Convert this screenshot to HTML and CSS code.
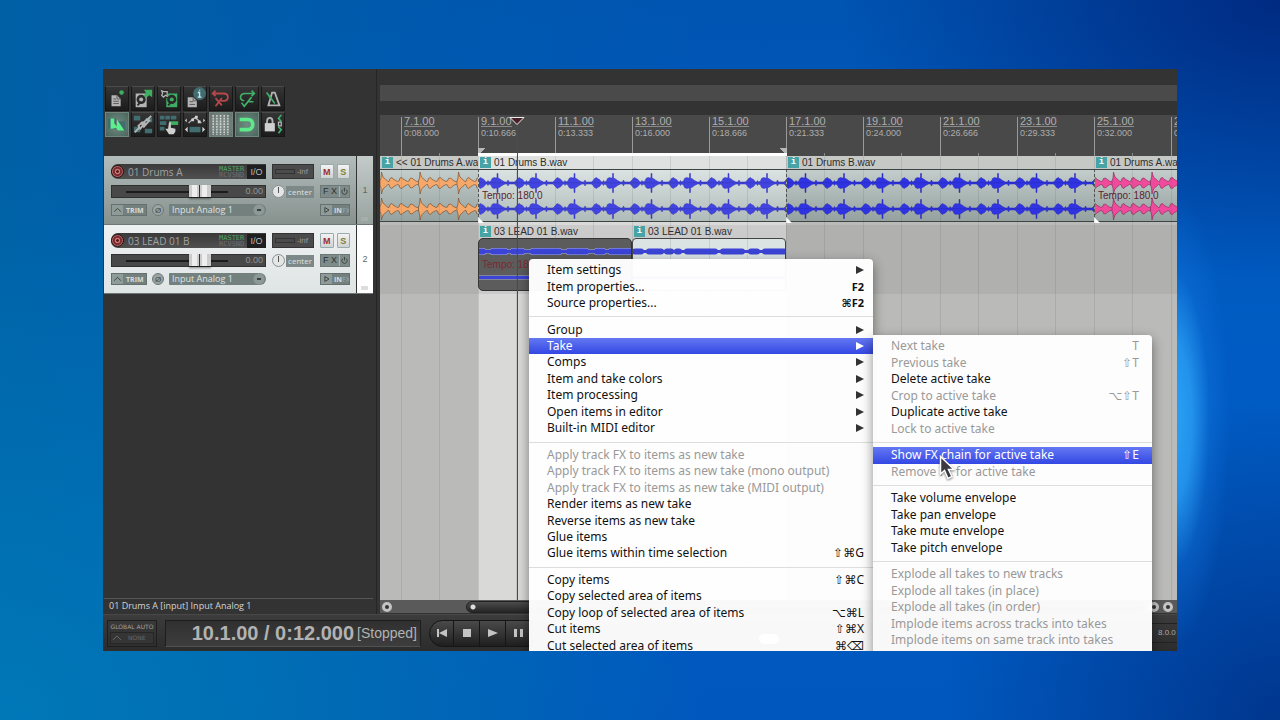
FILE: index.html
```html
<!DOCTYPE html>
<html lang="en">
<head>
<meta charset="utf-8">
<title>Audio workstation</title>
<link rel="stylesheet" href="styles.css">
</head>
<body>
<svg class="defs" width="0" height="0" aria-hidden="true">
  <defs>
    <path id="beat" d="M0 12H2L4 10 5 8.500 7 7.500 8 8.500 10 9.500 12 12H13L14 10.500 15 12 17 11 18 8.500 20 7.500 22 8 23 7.500V3.500H24V8L26 9 28 10.500 31 12H33L34 10 35 12H38.500V13.200H0Z"/>
    <g id="bar"><use href="#beat"/><use href="#beat" x="38.500"/></g>
    <pattern id="blueWave" x="-5" y="0" width="77" height="26" patternUnits="userSpaceOnUse">
      <g class="blue"><use href="#bar"/><use href="#bar" transform="translate(0 26) scale(1 -1)"/></g>
    </pattern>
    <path id="drops" d="M0 11L1 8 1.500 2 2 4 3 7 8 11.500 9 11.500 10 8.500 12 7.500 13 9 17.500 11.500 19 11 20 8 22 7.500 23 9 27.500 11.500 29 11 30 8.500 32 8 33 9 36.500 11.500 38.500 11V15L36.500 14.500 33 17 32 18 30 17.500 29 15 27.500 14.500 23 17 22 18.500 20 18 19 15 17.500 14.500 13 17 12 18.500 10 17.500 9 14.500 8 14.500 3 19 2 22 1.500 24 1 18 0 15Z"/>
    <pattern id="orangeWave" x="0" y="0" width="77" height="26" patternUnits="userSpaceOnUse">
      <g class="orange"><use href="#drops"/><use href="#drops" x="38.500"/></g>
    </pattern>
    <pattern id="pinkWave" x="17" y="0" width="77" height="26" patternUnits="userSpaceOnUse">
      <g class="pink"><use href="#drops"/><use href="#drops" x="38.500"/></g>
    </pattern>
  </defs>
</svg>

<main class="app">
  <div class="workspace">
    <section class="side">
      <div class="toolbar">
        <button class="tool" aria-label="New project"><svg viewBox="0 0 24 25"><path class="g" d="M6 9h6l4 4v8H6z"/><path class="l" d="M12 9v4h4M8 13h3M8 15.500h6M8 18h6"/><circle class="gr" cx="17" cy="6" r="2.500"/></svg></button>
        <button class="tool" aria-label="Open project"><svg viewBox="0 0 24 25"><path class="g" d="M4 7h12v15H4z"/><circle class="k" cx="10" cy="13.500" r="5"/><circle class="g" cx="10" cy="13.500" r="2.200"/><path class="ks" d="M10 16l-4 4"/><path class="gr" d="M13 3h9v8l-3-2-4 3-2-3 2-3z"/></svg></button>
        <button class="tool" aria-label="Save project"><svg viewBox="0 0 24 25"><path class="gr" d="M9 7h12v15H9z"/><circle class="k" cx="15" cy="13.500" r="5"/><circle class="gr" cx="15" cy="13.500" r="2.200"/><path class="ks" d="M15 16l-4 4"/><path class="k" d="M2 2h9v10H2z"/><path class="gs" d="M4 4l2 1h4v5l-2-1-2 2-2-2 1-2z"/></svg></button>
        <button class="tool" aria-label="Project settings"><svg viewBox="0 0 24 25"><circle class="t" cx="17" cy="7" r="7"/><path class="g" d="M4 11h6l4 4v7H4z"/><path class="l" d="M10 11v4h4M6 16h4M6 19h6"/><path class="ws" d="M15 6h2v5M15 11h4M17 3v1"/></svg></button>
        <button class="tool" aria-label="Undo"><svg viewBox="0 0 24 25"><path class="rs" d="M4 7h11c6 0 6 8 0 8h-3M6 4L3 7l3 3M6 12l7 8M13 12l-7 9"/></svg></button>
        <button class="tool" aria-label="Redo"><svg viewBox="0 0 24 25"><path class="grs" d="M20 7H10c-6 0-7 7-1 8M17 4l3 3-3 3M6 17l3 4 8-10M14 16h5"/></svg></button>
        <button class="tool" aria-label="Metronome"><svg viewBox="0 0 24 25"><path class="gs w2" d="M7 20L11 6h3l5 14z"/><path class="grs" d="M14 18L5 6"/><path class="gr" d="M7 9l4 2-3 3z"/></svg></button>
        <button class="tool on" aria-label="Auto crossfade"><svg viewBox="0 0 24 25"><path class="t" d="M2 6h9v11H2zM13 9h8v10h-8z"/><path class="br" d="M5 6h4v5l3 4V7l8 12h-7l-2-3-4 1H5z"/></svg></button>
        <button class="tool" aria-label="Item grouping"><svg viewBox="0 0 24 25"><path class="t" d="M2 3h7v5H2zM15 5h7v5h-7zM2 15h7v6H2zM14 17h8v5h-8z"/><path class="gs w2" d="M3 21l5-5M16 8l5-5M7 14l4-4 3 1-5 6zM11 12l5-5 3 1-6 7z"/></svg></button>
        <button class="tool" aria-label="Ripple editing"><svg viewBox="0 0 24 25"><path class="t" d="M2 3h5v4H2zM8 3h5v4H8zM14 3h6v4h-6zM2 9h7v4H2zM2 15h5v4H2z"/><path class="gr" d="M12 9h10v4H12z"/><path class="w" d="M12 10h2v6l5 1v3l-2 3h-5l-4-6h3z"/></svg></button>
        <button class="tool" aria-label="Move envelopes"><svg viewBox="0 0 24 25"><path class="gs" d="M5 11l4-4 3-2 4 3 3 3"/><path class="w" d="M8 6h3v3H8zM12 3h3v3h-3zM15 8h3v3h-3zM1 8l2-2v4zM23 8l-2-2v4zM1 18l3-3v6zM23 18l-3-3v6z"/><path class="t" d="M6 15h12v6H6z"/></svg></button>
        <button class="tool on pale" aria-label="Grid"><svg viewBox="0 0 24 25"><path class="dots" d="M3.500 2v22M7.500 2v22M11.500 2v22M15.500 2v22M19.500 2v22"/></svg></button>
        <button class="tool on" aria-label="Snap"><svg viewBox="0 0 24 25"><path class="brs" d="M4 7h9c7 0 7 11 0 11H4"/></svg></button>
        <button class="tool" aria-label="Lock"><svg viewBox="0 0 24 25"><path class="gs w2" d="M5.500 12V9c0-5 6-5 6 0v3"/><path class="w" d="M3 11h11v9H3z"/><path class="grs" d="M21 2l-3 4 3 3M18 15l3 3-3 4"/><path class="gs" d="M18 10h3v4h-3z"/></svg></button>
      </div>

      <div class="tracks">
        <article class="track">
          <div class="strip">
            <div class="name"><button class="rec" aria-label="Record arm"></button><span class="title">01 Drums A</span><span class="send"><b>MASTER</b><i>RCVSND</i></span><button class="io">I/O</button></div>
            <div class="meter"><span>-inf</span></div>
            <div class="pair"><button class="mute">M</button><button class="solo">S</button></div>
            <div class="fader"><span class="rail"></span><span class="knob"></span><output>0.00</output></div>
            <div class="pan"><span class="dial"></span><span class="panval">center</span></div>
            <div class="fx"><button>F X</button><button aria-label="Bypass"><svg viewBox="0 0 10 10"><path d="M3 3a3 3 0 1 0 4 0M5 1v4"/></svg></button></div>
            <div class="input"><button class="trim"><svg viewBox="0 0 12 12"><path d="M2 8L6 4l4 4"/></svg>TRIM</button><button class="phase">Ø</button><select class="source" aria-label="Track 1 input"><option>Input Analog 1</option></select></div>
            <span></span>
            <button class="monitor"><svg viewBox="0 0 12 12"><path d="M4 3l5 3-5 3z"/></svg>IN<i>FX</i></button>
          </div>
          <div class="index">1<span class="folder"></span></div>
        </article>
        <article class="track selected">
          <div class="strip">
            <div class="name"><button class="rec" aria-label="Record arm"></button><span class="title">03 LEAD 01 B</span><span class="send"><b>MASTER</b><i>RCVSND</i></span><button class="io">I/O</button></div>
            <div class="meter"><span>-inf</span></div>
            <div class="pair"><button class="mute">M</button><button class="solo">S</button></div>
            <div class="fader"><span class="rail"></span><span class="knob"></span><output>0.00</output></div>
            <div class="pan"><span class="dial"></span><span class="panval">center</span></div>
            <div class="fx"><button>F X</button><button aria-label="Bypass"><svg viewBox="0 0 10 10"><path d="M3 3a3 3 0 1 0 4 0M5 1v4"/></svg></button></div>
            <div class="input"><button class="trim"><svg viewBox="0 0 12 12"><path d="M2 8L6 4l4 4"/></svg>TRIM</button><button class="phase">Ø</button><select class="source" aria-label="Track 2 input"><option>Input Analog 1</option></select></div>
            <span></span>
            <button class="monitor"><svg viewBox="0 0 12 12"><path d="M4 3l5 3-5 3z"/></svg>IN<i>FX</i></button>
          </div>
          <div class="index">2<span class="folder"></span></div>
        </article>
      </div>
      <div class="status">01 Drums A [input] Input Analog 1</div>
    </section>

    <section class="arrange">
      <div class="overview"></div>
      <div class="ruler">
        <div class="mark"><b>7.1.00</b><span>0:08.000</span></div>
        <div class="mark"><b>9.1.00</b><span>0:10.666</span></div>
        <div class="mark"><b>11.1.00</b><span>0:13.333</span></div>
        <div class="mark"><b>13.1.00</b><span>0:16.000</span></div>
        <div class="mark"><b>15.1.00</b><span>0:18.666</span></div>
        <div class="mark"><b>17.1.00</b><span>0:21.333</span></div>
        <div class="mark"><b>19.1.00</b><span>0:24.000</span></div>
        <div class="mark"><b>21.1.00</b><span>0:26.666</span></div>
        <div class="mark"><b>23.1.00</b><span>0:29.333</span></div>
        <div class="mark"><b>25.1.00</b><span>0:32.000</span></div>
        <div class="mark"><b>27.1.00</b><span>0:34.666</span></div>
        <div class="loop"></div>
      </div>
      <div class="lanes">
        <div class="selection"></div>
        <div class="lane">
          <div class="item lead-in">
            <div class="label"><i>i</i>&lt;&lt; 01 Drums A.wav</div>
            <div class="body"><svg class="wave"><rect width="100%" height="52" fill="url(#orangeWave)"/></svg></div>
          </div>
          <div class="item four lit">
            <div class="label"><i>i</i>01 Drums B.wav</div>
            <div class="body"><svg class="wave"><rect width="100%" height="52" fill="url(#blueWave)"/></svg><span class="tempo">Tempo: 180.0</span></div>
          </div>
          <div class="item four">
            <div class="label"><i>i</i>01 Drums B.wav</div>
            <div class="body"><svg class="wave deep"><rect width="100%" height="52" fill="url(#blueWave)"/></svg></div>
          </div>
          <div class="item rest">
            <div class="label"><i>i</i>01 Drums A.wav</div>
            <div class="body"><svg class="wave"><rect width="100%" height="52" fill="url(#pinkWave)"/></svg><span class="tempo">Tempo: 180.0</span></div>
          </div>
        </div>
        <div class="lane second">
          <div class="lead-in"></div>
          <div class="item two dark">
            <div class="label"><i>i</i>03 LEAD 01 B.wav</div>
            <div class="body"><svg class="wave"><g class="halo"><path d="M0 12.500H154M0 38.500H154"/><path class="fat" d="M2 12.500H4M14 12.500H26M34 12.500H43M54 12.500H80M90 12.500H107M118 12.500H124M132 12.500H150"/></g><g class="core"><path d="M0 12.500H154M0 38.500H154"/><path class="fat" d="M2 12.500H4M14 12.500H26M34 12.500H43M54 12.500H80M90 12.500H107M118 12.500H124M132 12.500H150"/></g></svg><span class="tempo">Tempo: 180.0</span></div>
          </div>
          <div class="item two bright">
            <div class="label"><i>i</i>03 LEAD 01 B.wav</div>
            <div class="body"><svg class="wave"><g class="core"><path d="M0 12.500H154M0 38.500H154"/><path class="fat" d="M2 12.500H8M16 12.500H28M34 12.500H38M44 12.500H46M54 12.500H82M90 12.500H109M118 12.500H124M132 12.500H152"/></g></svg></div>
          </div>
        </div>
        <div class="gridlines"></div>
      </div>
      <div class="scroll"><span class="ring"></span><span class="thumb"></span><span class="ring"></span><span class="ring"></span></div>
      <div class="playhead"><svg viewBox="0 0 16 9"><path d="M1 .500h14L8 7.500z"/></svg></div>
    </section>
  </div>

  <footer class="transport">
    <div class="auto"><span>GLOBAL AUTO</span><button><svg viewBox="0 0 12 8"><path d="M2 6l4-4 4 4"/></svg>NONE</button></div>
    <div class="clock"><b>10.1.00 / 0:12.000</b><span>[Stopped]</span></div>
    <div class="buttons">
      <button aria-label="Go to start"><svg viewBox="0 0 12 10"><path d="M1 1h2v8H1zM3 5l8-4v8z"/></svg></button>
      <button aria-label="Stop"><svg viewBox="0 0 12 10"><path d="M2 1h8v8H2z"/></svg></button>
      <button aria-label="Play"><svg viewBox="0 0 12 10"><path d="M1 1l10 4-10 4z"/></svg></button>
      <button aria-label="Pause"><svg viewBox="0 0 12 10"><path d="M1 1h3v8H1zM7 1h3v8H7z"/></svg></button>
    </div>
    <div class="rate">8.0.0</div>
  </footer>

  <div class="menu main" role="menu">
    <button class="row" role="menuitem">Item settings<i class="arrow"></i></button>
    <button class="row" role="menuitem">Item properties...<kbd class="fn">F2</kbd></button>
    <button class="row" role="menuitem">Source properties...<kbd class="fn">⌘F2</kbd></button>
    <hr>
    <button class="row" role="menuitem">Group<i class="arrow"></i></button>
    <button class="row active" role="menuitem">Take<i class="arrow"></i></button>
    <button class="row" role="menuitem">Comps<i class="arrow"></i></button>
    <button class="row" role="menuitem">Item and take colors<i class="arrow"></i></button>
    <button class="row" role="menuitem">Item processing<i class="arrow"></i></button>
    <button class="row" role="menuitem">Open items in editor<i class="arrow"></i></button>
    <button class="row" role="menuitem">Built-in MIDI editor<i class="arrow"></i></button>
    <hr>
    <button class="row" role="menuitem" disabled>Apply track FX to items as new take</button>
    <button class="row" role="menuitem" disabled>Apply track FX to items as new take (mono output)</button>
    <button class="row" role="menuitem" disabled>Apply track FX to items as new take (MIDI output)</button>
    <button class="row" role="menuitem">Render items as new take</button>
    <button class="row" role="menuitem">Reverse items as new take</button>
    <button class="row" role="menuitem">Glue items</button>
    <button class="row" role="menuitem">Glue items within time selection<kbd>⇧⌘G</kbd></button>
    <hr>
    <button class="row" role="menuitem">Copy items<kbd>⇧⌘C</kbd></button>
    <button class="row" role="menuitem">Copy selected area of items</button>
    <button class="row" role="menuitem">Copy loop of selected area of items<kbd>⌥⌘L</kbd></button>
    <button class="row" role="menuitem">Cut items<kbd>⇧⌘X</kbd></button>
    <button class="row" role="menuitem">Cut selected area of items<kbd>⌘⌫</kbd></button>
    <span class="glint"></span>
  </div>

  <div class="menu sub" role="menu">
    <button class="row" role="menuitem" disabled>Next take<kbd>T</kbd></button>
    <button class="row" role="menuitem" disabled>Previous take<kbd>⇧T</kbd></button>
    <button class="row" role="menuitem">Delete active take</button>
    <button class="row" role="menuitem" disabled>Crop to active take<kbd>⌥⇧T</kbd></button>
    <button class="row" role="menuitem">Duplicate active take</button>
    <button class="row" role="menuitem" disabled>Lock to active take</button>
    <hr>
    <button class="row active" role="menuitem">Show FX chain for active take<kbd>⇧E</kbd></button>
    <button class="row" role="menuitem" disabled>Remove FX for active take</button>
    <hr>
    <button class="row" role="menuitem">Take volume envelope</button>
    <button class="row" role="menuitem">Take pan envelope</button>
    <button class="row" role="menuitem">Take mute envelope</button>
    <button class="row" role="menuitem">Take pitch envelope</button>
    <hr>
    <button class="row" role="menuitem" disabled>Explode all takes to new tracks</button>
    <button class="row" role="menuitem" disabled>Explode all takes (in place)</button>
    <button class="row" role="menuitem" disabled>Explode all takes (in order)</button>
    <button class="row" role="menuitem" disabled>Implode items across tracks into takes</button>
    <button class="row" role="menuitem" disabled>Implode items on same track into takes</button>
    <button class="row" role="menuitem">Paste as takes in items</button>
  </div>

  <svg class="cursor" viewBox="0 0 17 26" aria-hidden="true"><path d="M1.500 1.500V19l4-3.500 3.500 8 4-2-3.500-7H15z"/></svg>
</main>
</body>
</html>
```

FILE: styles.css
```css
* { box-sizing: border-box; }

body {
  margin: 0;
  min-height: 100vh;
  padding: 69px 103px;
  display: flex;
  font-family: "Liberation Sans", Arial, sans-serif;
  background:
    radial-gradient(ellipse 58px 230px at 1172px 420px, #2ba4f6 0, rgba(40, 155, 242, .85) 35%, rgba(20, 120, 225, .35) 65%, rgba(10, 100, 210, 0) 100%),
    radial-gradient(ellipse 440px 280px at 100% 0, #002a82 0, rgba(0, 42, 134, 0) 100%),
    radial-gradient(ellipse 340px 320px at 100% 100%, #00368e 0, rgba(0, 60, 152, 0) 100%),
    radial-gradient(ellipse 700px 560px at 0 100%, #0078b8 0, rgba(0, 112, 178, 0) 100%),
    linear-gradient(90deg, #0060a6 0, rgba(0, 96, 170, 0) 55%),
    linear-gradient(180deg, #0054b2 0, #005cc4 50%, #0058be 100%);
}

button, select { font: inherit; color: inherit; padding: 0; border: 0; margin: 0; background: none; }
i { font-style: normal; }
svg { display: block; }
.defs { position: absolute; }

.app {
  position: relative;
  flex: 1;
  min-width: 0;
  display: flex;
  flex-direction: column;
  overflow: hidden;
  background: #333;
}

.workspace { flex: 1; display: grid; grid-template-columns: 274px minmax(0, 1fr); }

/* Left column */
.side { display: flex; flex-direction: column; padding-top: 17px; border-right: 1px solid #262626; }
.toolbar { display: grid; grid-template-columns: repeat(7, 24px); grid-auto-rows: 25px; gap: 1px 2px; padding-left: 2px; }
.tool { background: linear-gradient(#353535, #1c1c1c); border: 1px solid #171717; border-top-color: #4a4a4a; }
.tool svg { width: 22px; height: 23px; fill: none; }
.tool.on { background: radial-gradient(#6f8c82, #4b655d); border-color: #70857e; }
.tool.pale { background: radial-gradient(#87928f, #64716d); }
.tool .g { fill: #b4b4b4; }
.tool .w { fill: #d0d0d0; }
.tool .k { fill: #2a2a2a; }
.tool .t { fill: #426d70; }
.tool .gr { fill: #3fae62; }
.tool .br { fill: #5cf08a; }
.tool .l { stroke: #555; }
.tool .gs { stroke: #b4b4b4; stroke-width: 1.400; }
.tool .ks { stroke: #2a2a2a; stroke-width: 2; }
.tool .ws { stroke: #cfe6ea; stroke-width: 1.500; }
.tool .rs { stroke: #b8474a; stroke-width: 2; }
.tool .grs { stroke: #43b068; stroke-width: 1.800; }
.tool .brs { stroke: #5ee98a; stroke-width: 4; }
.tool .w2 { stroke-width: 2; }
.tool .dots { stroke: #d7dedb; stroke-width: 1.500; stroke-dasharray: 2 1; }

.tracks { padding: 19px 3px 0 1px; flex: 1; }
.track { display: flex; height: 69px; border-bottom: 1px solid #6d7876; background: linear-gradient(#b2bcba, #87928f); }
.strip {
  flex: 1;
  display: grid;
  grid-template-columns: 155px 42px 30px;
  grid-template-rows: 15px 13px 12px;
  gap: 6px;
  padding: 8px 0 0 7px;
  border-right: 1px solid #333;
}
.index { position: relative; width: 16px; display: grid; place-items: center; font-size: 9px; color: #606866; background: linear-gradient(#c3cbc9, #98a3a0); }
.track.selected { background: linear-gradient(#eef1f1, #dfe4e4); }
.selected .index { background: #fff; }
.folder { position: absolute; right: 5px; bottom: 3px; width: 7px; height: 4px; background: #a7adab; }
.selected .folder { background: #ddd; }

.name { display: flex; align-items: center; background: linear-gradient(#3a3a3a, #505050); border-radius: 7px 0 0 7px; color: #a2a2a2; }
.rec { width: 13px; height: 13px; border-radius: 50%; border: 1px solid #2a1515; background: radial-gradient(#5a1a1c 0 15%, #c77 20% 30%, #7a2c2e 40% 55%, #b06062 60%); }
.title { flex: 1; padding-left: 4px; font: 10px "Open Sans", sans-serif; white-space: nowrap; }
.send { display: flex; flex-direction: column; font: 7px/6px "DejaVu Sans Mono", monospace; width: 28px; white-space: nowrap; }
.send b { color: #4fa35f; font-weight: normal; }
.send i { color: #6e6e6e; }
.io { width: 19px; height: 14px; background: #1f1f1f; color: #bbb; font-size: 9px; }
.meter { border: 1px solid #333; background: #4b4b4b; display: flex; align-items: center; justify-content: flex-end; padding-right: 5px; font-size: 8px; color: #999; }
.meter::before { content: ""; flex: 1; height: 3px; margin: 0 2px; border: 1px solid #333; }
.pair { display: flex; gap: 3px; }
.pair button { flex: 1; background: linear-gradient(#f3f3f3, #cfd2d2); border: 1px solid #9aa; border-radius: 1px; font: bold 9px "Liberation Sans", sans-serif; }
.mute { color: #9b2c32; }
.solo { color: #7a7d35; }
.fader { position: relative; background: #484848; border: 1px solid #303030; color: #939393; font-size: 9px; text-align: right; padding-right: 2px; line-height: 11px; }
.rail { position: absolute; left: 14px; top: 5px; width: 102px; height: 2px; background: #1c1c1c; }
.knob { position: absolute; left: 77px; top: -1px; width: 22px; height: 12px; background: linear-gradient(90deg, #ccc 0 3px, #eee 3px 8px, #ccc 8px 10px, #333 10px 11px, #ccc 11px 13px, #eee 13px 18px, #ccc 18px); box-shadow: 0 2px 2px rgba(0, 0, 0, .4); }
.pan { display: flex; align-items: center; gap: 1px; }
.dial { width: 13px; height: 13px; border-radius: 50%; border: 1px solid #8b8f8f; background: linear-gradient(90deg, transparent 5px, #555 5px 6px, transparent 6px) 0 1px / 11px 6px no-repeat, #e4e6e6; }
.panval { flex: 1; height: 12px; background: #7d8988; color: #dde2e2; font: 8px/12px "Open Sans", sans-serif; text-align: center; }
.fx { display: flex; background: #7f8b89; border: 1px solid #6d7977; color: #2c3332; font-size: 9px; line-height: 11px; }
.fx button:first-child { flex: 1; border-right: 1px solid #aab3b1; }
.fx svg { width: 9px; height: 9px; fill: none; stroke: #3a4140; }
.input { display: flex; justify-content: space-between; align-items: center; color: #d7dddc; }
.trim, .monitor { display: flex; align-items: center; gap: 3px; height: 12px; background: #74807e; font: bold 7px "Open Sans", sans-serif; border: 1px solid #66716f; }
.trim { width: 36px; }
.trim svg, .monitor svg { flex: none; width: 11px; height: 10px; background: #8f9b98; fill: none; stroke: #2f3635; }
.monitor { color: #d7dddc; gap: 2px; overflow: hidden; }
.monitor i { color: #8f9b98; margin-left: -2px; }
.phase { width: 12px; height: 12px; border-radius: 50%; border: 1px solid #6e7876; background: #9aa5a3; color: #444; font-size: 8px; line-height: 9px; }
.source {
  width: 97px; height: 12px; padding-left: 3px;
  appearance: none;
  border-radius: 1px 6px 6px 1px;
  background: linear-gradient(#3a4140, #3a4140) 88px 5px / 4px 2px no-repeat, radial-gradient(circle at 90px 6px, #8d9997 5px, transparent 6px), #74807e;
  color: #dfe4e3; font: 9px/12px "Open Sans", sans-serif;
}
.status { margin: 0 3px 0 1px; padding-left: 5px; height: 16px; border-top: 1px solid #555; color: #d4d4d4; font: 9px/13px "Open Sans", sans-serif; }

/* Timeline */
.arrange { position: relative; display: flex; flex-direction: column; padding: 16px 0 1px 3px; min-width: 0; }
.overview { height: 16px; background: #4a4a4a; margin-bottom: 14px; }
.ruler { position: relative; display: flex; height: 41px; padding: 2px 0 0 21px; overflow: hidden; background: #494949; }
.mark { flex: 0 0 77px; padding-left: 2px; border-left: 1px solid #9a9a9a; color: #aeaeae; white-space: nowrap; background: linear-gradient(#888, #888) 37px 100% / 1px 3px no-repeat; }
.mark b { display: table; font-weight: normal; font-size: 11px; line-height: 9px; border-bottom: 1px solid #8a8a8a; }
.mark span { font-size: 9px; line-height: 12px; display: block; }
.loop { position: absolute; left: 98px; bottom: 0; width: 309px; height: 8px; background:
  linear-gradient(#fff, #fff) 0 100% / 100% 3px no-repeat,
  linear-gradient(135deg, #b8b8b8 50%, transparent 50%) 0 0 / 9px 6px no-repeat,
  linear-gradient(225deg, #b8b8b8 50%, transparent 50%) 100% 0 / 9px 6px no-repeat; }
.lanes { position: relative; flex: 1; overflow: hidden; background: #babbb9; }
.selection { position: absolute; left: 98px; top: 0; bottom: 0; width: 308px; background: rgba(255, 255, 255, .45); }
.gridlines { position: absolute; inset: 0; background: repeating-linear-gradient(90deg, transparent 0 21px, rgba(70, 80, 80, .14) 21px 22px, transparent 22px 59px, rgba(70, 80, 80, .14) 59px 60px, transparent 60px 77px); }
.lane { position: relative; display: flex; height: 69px; }
.second { background: rgba(90, 90, 90, .1); }
.lead-in { flex: 0 0 98px; }
.four { flex: 0 0 308px; }
.two { flex: 0 0 154px; }
.rest { flex: 1; }
.item { position: relative; min-width: 0; overflow: hidden; }
.four::after, .rest::after { content: ""; position: absolute; left: 0; bottom: 2px; border: solid transparent; border-width: 6px 0 0 6px; border-left-color: #fff; }
.label { display: flex; align-items: center; gap: 3px; height: 13px; padding-left: 2px; font-size: 10px; color: #2d2d2d; white-space: nowrap; background: #c6c8c6; }
.label i { flex: none; width: 11px; height: 11px; background: #46a3a6; color: #fff; font: bold 9px/11px "Liberation Mono", monospace; text-align: center; }
.lit .label { background: #dfe1e0; }
.second .label { background: none; }
.body { position: relative; height: 53px; border: solid #3c4443; border-width: 1px 0; background: linear-gradient(#c3cdcb, #94a19f); }
.lit .body { background: linear-gradient(#dbe3e2, #afbbb9); }
.four .body, .rest .body { border-left: 1px dashed #555; }
.dark .body { background: #5c5c5c; border: 1px solid #333; border-radius: 5px 5px 0 5px; }
.bright .body { background: #dbe3e3; border: 1px solid #444; border-radius: 4px; }
.wave { width: 100%; height: 51px; }
.blue { fill: #4144e0; stroke: #3133b0; stroke-width: .500; }
.deep { filter: brightness(.8) saturate(1.400); }
.orange { fill: #f5a869; stroke: #7a5335; stroke-width: .700; }
.pink { fill: #ef4a9b; stroke: #8e2c60; stroke-width: .700; }
.core { fill: none; stroke: #3b44d4; stroke-width: 3; }
.core .fat { stroke-width: 6; stroke-linecap: round; }
.halo { fill: none; stroke: #a9aee0; stroke-width: 4; }
.halo .fat { stroke-width: 7; stroke-linecap: round; }
.tempo { position: absolute; left: 3px; top: 20px; font-size: 10px; line-height: 12px; color: #5a2430; white-space: nowrap; }
.dark .tempo { color: #7a2a32; }

.playhead { position: absolute; left: 140px; top: 48px; bottom: 14px; width: 1px; background: #7d3444; }
.playhead svg { position: absolute; left: -8px; top: 0; width: 16px; height: 9px; fill: #4a2028; stroke: #eee; }
.scroll { display: flex; align-items: center; height: 13px; padding: 0 4px 0 2px; gap: 4px; background: #5a5a5a; }
.ring { width: 10px; height: 10px; border-radius: 50%; border: 3px solid #c4c4c4; background: #333; }
.thumb { flex: 1; height: 12px; margin-left: 70px; border-radius: 6px; border: 1px solid #222; background: radial-gradient(circle at 6px 5px, #ddd 2px, transparent 3px), linear-gradient(#4b4b4b, #262626); }

/* Transport */
.transport { display: flex; align-items: center; height: 37px; padding: 0 0 0 4px; gap: 8px; background: linear-gradient(#3c3c3c, #2c2c2c); border-top: 1px solid #484848; }
.auto { width: 50px; height: 27px; border: 1px solid #1f1f1f; color: #a2a2a2; font: 6px/9px "DejaVu Sans", sans-serif; text-align: center; }
.auto span { display: block; white-space: nowrap; padding: 1px 0; }
.auto button { display: flex; align-items: center; gap: 5px; width: 44px; height: 12px; margin: 0 auto; border: 1px solid #262626; color: #6a6a6a; background: #353535; }
.auto svg { width: 12px; height: 8px; fill: none; stroke: #666; }
.clock { display: flex; align-items: center; justify-content: flex-end; gap: 3px; width: 256px; height: 27px; padding-right: 3px; border: 1px solid #1e1e1e; border-bottom-color: #505050; background: linear-gradient(#303030, #3d3d3d); color: #b2b2b2; white-space: nowrap; }
.clock b { font-size: 20px; }
.clock span { font-size: 14px; }
.buttons { display: flex; height: 27px; border-radius: 14px 0 0 14px; overflow: hidden; border: 1px solid #151515; background: linear-gradient(#4a4a4a, #1f1f1f); }
.buttons button { width: 26px; display: grid; place-items: center; border-right: 1px solid #151515; }
.buttons button:first-child { width: 24px; }
.buttons svg { width: 12px; height: 10px; fill: #c4c4c4; }
.rate { margin-left: auto; flex: 0 0 30px; height: 20px; padding-left: 10px; border: 1px solid #222; border-right: 0; color: #aaa; font-size: 8px; line-height: 18px; white-space: nowrap; overflow: hidden; }

/* Context menus */
.menu { position: absolute; display: flex; flex-direction: column; padding-top: 3px; background: rgba(255, 255, 255, .97); box-shadow: 0 4px 12px rgba(0, 0, 0, .45); color: #111; font: 12px "Noto Sans", sans-serif; }
.main { left: 426px; top: 190px; bottom: -3px; width: 344px; border-radius: 4px 4px 0 0; }
.sub { left: 770px; top: 266px; bottom: -14px; width: 279px; border-radius: 0 4px 0 0; }
.row { flex: 1 1 0; min-height: 0; display: flex; align-items: center; padding: 0 9px 0 18px; line-height: 16px; text-align: left; white-space: nowrap; }
.sub .row { padding-right: 13px; }
.row:disabled { color: #999; }
.row.active { background: linear-gradient(#6478f2, #3347e4); color: #fff; }
.row kbd { margin-left: auto; font: 12px/16px "Noto Sans", "DejaVu Sans", sans-serif; }
.row .fn { font-size: 11px; font-weight: bold; }
.arrow { margin-left: auto; border: solid transparent; border-width: 4px 0 4px 8px; border-left-color: #333; }
.active .arrow { border-left-color: #fff; }
.menu hr { flex: 0 0 10px; margin: 0; border: 0; background: linear-gradient(#ddd, #ddd) 0 5px / 100% 1px no-repeat; }
.glint { position: absolute; left: 230px; bottom: 10px; width: 20px; height: 10px; border-radius: 5px; background: #fff; }

.cursor { position: absolute; left: 836px; top: 386px; width: 17px; height: 26px; fill: #3a3a40; stroke: #fff; stroke-width: 1.500; filter: drop-shadow(0 1px 1px rgba(0, 0, 0, .5)); }
```
